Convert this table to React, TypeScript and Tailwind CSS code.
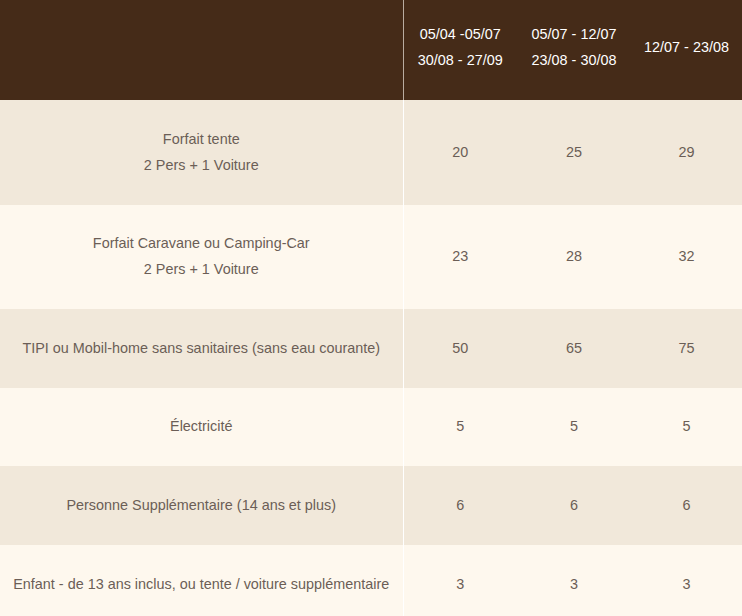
const rows = [
  { label: ['Forfait tente', '2 Pers + 1 Voiture'], prices: [20, 25, 29], h: 'h-[105px]' },
  { label: ['Forfait Caravane ou Camping-Car', '2 Pers + 1 Voiture'], prices: [23, 28, 32], h: 'h-[104px]' },
  { label: ['TIPI ou Mobil-home sans sanitaires (sans eau courante)'], prices: [50, 65, 75], h: 'h-[79px]' },
  { label: ['Électricité'], prices: [5, 5, 5], h: 'h-[78px]' },
  { label: ['Personne Supplémentaire (14 ans et plus)'], prices: [6, 6, 6], h: 'h-[79px]' },
  { label: ['Enfant - de 13 ans inclus, ou tente / voiture supplémentaire'], prices: [3, 3, 3], h: 'h-[79px]' },
]

export default function App() {
  return (
    <div className="w-[742px] bg-[#fef8ee] font-['Liberation_Sans',Arial,sans-serif] text-[14.4px] leading-[26px]">
      <table className="w-full border-collapse table-fixed">
        <colgroup>
          <col className="w-[403px]" />
          <col className="w-[114px]" />
          <col className="w-[114px]" />
          <col />
        </colgroup>
        <thead>
          <tr className="h-[100px] bg-[#452b18] text-white">
            <th className="border-r border-[#b9aca0] p-0"></th>
            <th className="px-0 pt-0 pb-[6px] font-normal text-center">
              <div>05/04 -05/07</div>
              <div>30/08 - 27/09</div>
            </th>
            <th className="px-0 pt-0 pb-[6px] font-normal text-center">
              <div>05/07 - 12/07</div>
              <div>23/08 - 30/08</div>
            </th>
            <th className="px-0 pt-0 pb-[6px] font-normal text-center">12/07 - 23/08</th>
          </tr>
        </thead>
        <tbody className="text-[#6b5e56]">
          {rows.map((row, i) => (
            <tr key={i} className={`${row.h} ${i % 2 === 0 ? 'bg-[#f1e8da]' : 'bg-[#fef8ee]'}`}>
              <td className="border-r border-white px-0 pt-0 pb-[2px] text-center">
                {row.label.map((l, j) => (
                  <div key={j}>{l}</div>
                ))}
              </td>
              {row.prices.map((p, j) => (
                <td key={j} className="px-0 pt-0 pb-[2px] text-center">{p}</td>
              ))}
            </tr>
          ))}
        </tbody>
      </table>
    </div>
  )
}
